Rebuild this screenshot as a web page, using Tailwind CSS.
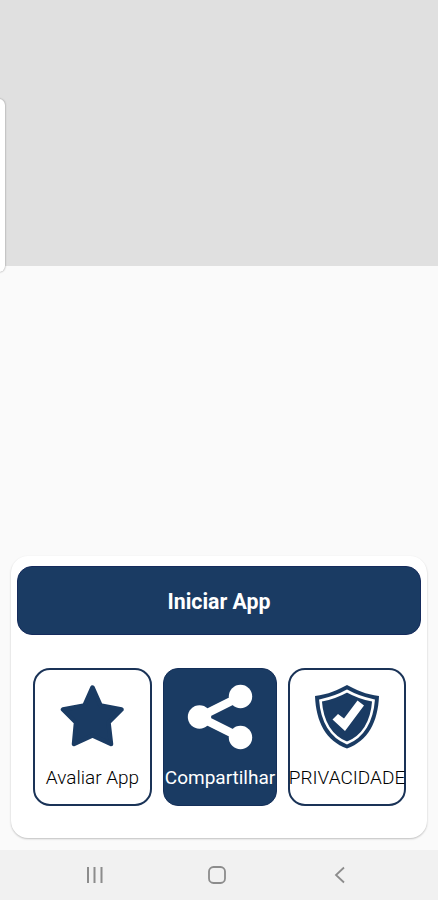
<!DOCTYPE html>
<html lang="pt-BR">
<head>
<meta charset="utf-8">
<title>Iniciar App</title>
<script src="https://cdn.jsdelivr.net/npm/@tailwindcss/browser@4"></script>
</head>
<body>
<div class="relative flex h-[900px] w-[438px] flex-col overflow-hidden bg-[#fafafa] font-['Roboto',sans-serif]">
  <div class="h-[266px] shrink-0 bg-[#e0e0e0]"></div>
  <div class="absolute top-[99px] -left-5 h-[173px] w-[25px] rounded-[6px] bg-white shadow-[0_0_2px_rgba(0,0,0,0.45)]"></div>

  <main class="mx-[11px] mt-[290px] h-[282px] shrink-0 rounded-[17px] bg-white px-[6px] pt-[10px] shadow-[0_1px_2px_rgba(0,0,0,0.24)]">
    <button class="block h-[69px] w-[404px] rounded-[15px] border border-[#152b5c] bg-[#1a3b63] pt-[2px] text-center text-[21.3px] font-bold text-white">Iniciar App</button>
    <div class="mt-[33px] ml-4 flex gap-[11px]">
      <button class="flex h-[138px] w-[119px] flex-col items-center rounded-[17px] border-2 border-[#1a3357] bg-white pt-[14px] text-black">
        <svg class="h-[66px] w-[66px] shrink-0" viewBox="0 0 66 66"><path d="M32.500 3.500 L40.500 21.500 L61.500 25.500 L48.500 38.500 L51 60 L32.500 51.500 L14 60 L16 38.500 L3 25.500 L24.500 21.500 Z" fill="#1a3b63" stroke="#1a3b63" stroke-width="4.500" stroke-linejoin="round"/></svg>
        <span class="mt-[16px] text-[19px] leading-6 font-light whitespace-nowrap">Avaliar App</span>
      </button>
      <button class="flex h-[138px] w-[114px] flex-col items-center rounded-[15px] border border-[#142f59] bg-[#1a3b63] pt-[15px] text-white">
        <svg class="h-[66px] w-[66px] shrink-0" viewBox="0 0 66 66"><path d="M53.500 12.500 L12.500 33 L53.500 53.500" fill="none" stroke="#fff" stroke-width="8.500"/><g fill="#fff"><circle cx="53.500" cy="12.500" r="11.700"/><circle cx="12.500" cy="33" r="11.700"/><circle cx="53.500" cy="53.500" r="11.700"/></g></svg>
        <span class="mt-[16px] text-[19px] leading-6 whitespace-nowrap">Compartilhar</span>
      </button>
      <button class="flex h-[138px] w-[118px] flex-col items-center rounded-[17px] border-2 border-[#1a3357] bg-white pt-[14px] text-black">
        <svg class="h-[66px] w-[66px] shrink-0" viewBox="0 0 66 66"><path d="M33 1 C42 6 52 10.500 65 12 C64 38 54 57 33 64.500 C12 57 2 38 1 12 C14 10.500 24 6 33 1 Z" fill="#1a3b63"/><path d="M33 7 C41 11.500 49 14.500 59.500 16.500 C58 37 49 52.500 33 59 C17 52.500 8 37 6.500 16.500 C17 14.500 25 11.500 33 7 Z" fill="none" stroke="#fff" stroke-width="2.700"/><path d="M18.500 35.500 L24 30 L30 34.500 L43.500 16.500 L50 21.500 L31 47 Z" fill="#fff"/></svg>
        <span class="mt-[16px] text-[19px] leading-6 font-light whitespace-nowrap">PRIVACIDADE</span>
      </button>
    </div>
  </main>

  <nav class="mt-auto flex h-[50px] shrink-0 items-center bg-[#f1f1f1] pl-[84px]">
    <svg class="h-[22px] w-[22px]" viewBox="0 0 22 22" fill="none" stroke="#8c8c8c" stroke-width="2"><path d="M4 3V19M10.500 3V19M17.500 3V19"/></svg>
    <svg class="ml-[100px] h-[22px] w-[22px]" viewBox="0 0 22 22" fill="none" stroke="#8c8c8c" stroke-width="1.800"><rect x="3" y="3" width="16" height="16" rx="4.500"/></svg>
    <svg class="ml-[101px] h-[22px] w-[22px]" viewBox="0 0 22 22" fill="none" stroke="#8c8c8c" stroke-width="1.800"><path d="M15 3.500L7 11L15 18.500"/></svg>
  </nav>
</div>
</body>
</html>
